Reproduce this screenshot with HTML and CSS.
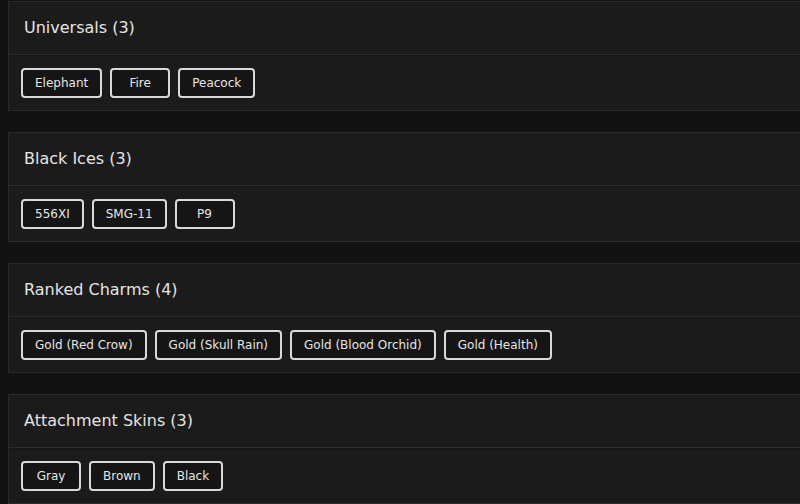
FILE: index.html
```html
<!DOCTYPE html>
<html>
<head>
<meta charset="utf-8">
<link rel="stylesheet" href="styles.css">
</head>
<body>
<main class="list">
  <section class="card">
    <h2 class="card-title">Universals (3)</h2>
    <div class="card-body">
      <span class="tag">Elephant</span><span class="tag">Fire</span><span class="tag">Peacock</span>
    </div>
  </section>
  <section class="card">
    <h2 class="card-title">Black Ices (3)</h2>
    <div class="card-body">
      <span class="tag">556XI</span><span class="tag">SMG-11</span><span class="tag">P9</span>
    </div>
  </section>
  <section class="card">
    <h2 class="card-title">Ranked Charms (4)</h2>
    <div class="card-body">
      <span class="tag">Gold (Red Crow)</span><span class="tag">Gold (Skull Rain)</span><span class="tag">Gold (Blood Orchid)</span><span class="tag">Gold (Health)</span>
    </div>
  </section>
  <section class="card">
    <h2 class="card-title">Attachment Skins (3)</h2>
    <div class="card-body">
      <span class="tag">Gray</span><span class="tag">Brown</span><span class="tag">Black</span>
    </div>
  </section>
</main>
</body>
</html>
```
FILE: styles.css
```css
html, body {
  margin: 0;
  padding: 0;
  background: #121212;
  overflow: hidden;
}
body {
  font-family: "DejaVu Sans", "Open Sans", sans-serif;
  color: #e2e2e2;
}
.list {
  display: flex;
  flex-direction: column;
  gap: 21px;
  margin: 1px 0 0 8px;
  width: 820px;
}
.card {
  background: #1b1b1b;
  border: 1px solid #2a2a2a;
  height: 110px;
  box-sizing: border-box;
  display: flex;
  flex-direction: column;
}
.card-title {
  margin: 0;
  height: 53px;
  box-sizing: border-box;
  padding: 0 0 2px 15px;
  display: flex;
  align-items: center;
  font-size: 16px;
  font-weight: 500;
  color: #e4e4e4;
  border-bottom: 1px solid #2c2c2c;
  box-shadow: 0 1px 0 #161616;
}
.card-body {
  flex: 1;
  display: flex;
  align-items: center;
  gap: 8px;
  padding: 0 12px;
}
.tag {
  box-sizing: border-box;
  min-width: 60px;
  height: 30px;
  padding: 0 12px;
  display: inline-flex;
  align-items: center;
  justify-content: center;
  border: 2px solid #d9d9d9;
  border-radius: 4px;
  background: #151515;
  font-size: 12px;
  color: #e6e6e6;
}
```
